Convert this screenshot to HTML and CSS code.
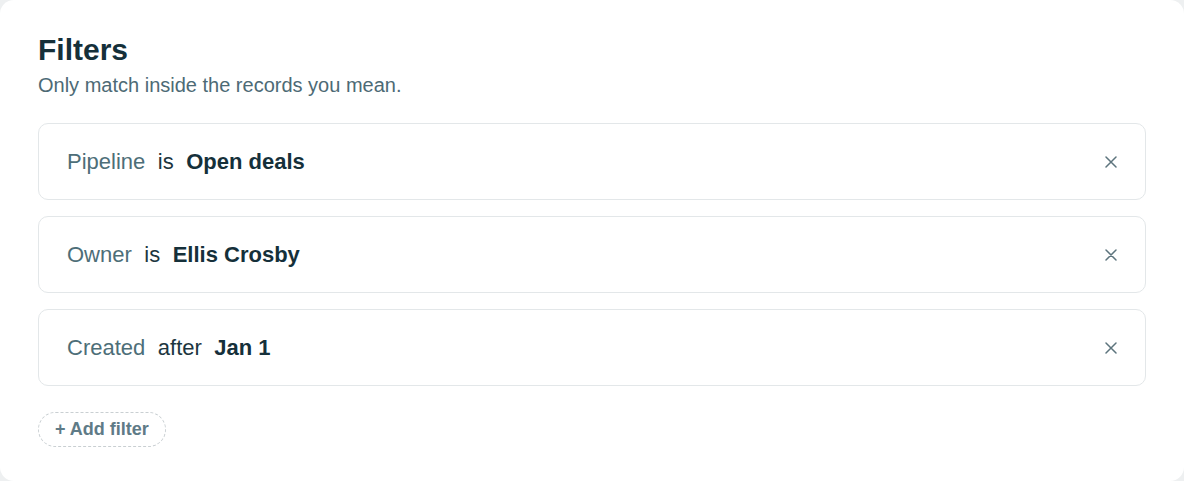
FILE: index.html
```html
<!DOCTYPE html>
<html lang="en">
<head>
<meta charset="utf-8">
<title>Filters</title>
<link rel="stylesheet" href="styles.css">
</head>
<body>
<div class="card">
  <h1 class="title">Filters</h1>
  <p class="subtitle">Only match inside the records you mean.</p>
  <div class="rows">
    <div class="row">
      <div class="cond"><span class="field">Pipeline</span><span class="op">is</span><span class="val">Open deals</span></div>
      <button class="remove" aria-label="Remove"><svg width="12" height="12" viewBox="0 0 12 12"><path d="M1 1L11 11M11 1L1 11" stroke="currentColor" stroke-width="1.5" stroke-linecap="round"/></svg></button>
    </div>
    <div class="row">
      <div class="cond"><span class="field">Owner</span><span class="op">is</span><span class="val">Ellis Crosby</span></div>
      <button class="remove" aria-label="Remove"><svg width="12" height="12" viewBox="0 0 12 12"><path d="M1 1L11 11M11 1L1 11" stroke="currentColor" stroke-width="1.5" stroke-linecap="round"/></svg></button>
    </div>
    <div class="row">
      <div class="cond"><span class="field">Created</span><span class="op">after</span><span class="val">Jan 1</span></div>
      <button class="remove" aria-label="Remove"><svg width="12" height="12" viewBox="0 0 12 12"><path d="M1 1L11 11M11 1L1 11" stroke="currentColor" stroke-width="1.5" stroke-linecap="round"/></svg></button>
    </div>
  </div>
  <button class="add">+ Add filter</button>
</div>
</body>
</html>
```
FILE: styles.css
```css
html, body {
  margin: 0;
  padding: 0;
  background: #eef0f1;
}
body {
  font-family: "Liberation Sans", Arial, sans-serif;
}
.card {
  box-sizing: border-box;
  width: 1184px;
  height: 481px;
  background: #ffffff;
  border-radius: 14px;
  padding: 32px 38px 0 38px;
  display: flex;
  flex-direction: column;
  align-items: flex-start;
}
.title {
  margin: 0;
  font-size: 30px;
  line-height: 36px;
  font-weight: 700;
  color: #15303a;
}
.subtitle {
  margin: 4px 0 0 0;
  font-size: 20px;
  line-height: 26px;
  color: #4d6a75;
}
.rows {
  align-self: stretch;
  margin-top: 25px;
  display: flex;
  flex-direction: column;
  gap: 16px;
}
.row {
  box-sizing: border-box;
  height: 77px;
  border: 1px solid #e3e7e9;
  border-radius: 10px;
  padding: 0 28px 0 28px;
  display: flex;
  align-items: center;
  justify-content: space-between;
}
.cond {
  display: flex;
  align-items: baseline;
  gap: 12.5px;
  font-size: 22px;
  line-height: 26px;
}
.field { color: #4d6e78; }
.op { color: #1c3640; }
.val { color: #15303a; font-weight: 700; }
.remove {
  border: 0;
  background: none;
  padding: 0;
  width: 12px;
  height: 12px;
  color: #5d747d;
  display: flex;
}
.add {
  margin-top: 26px;
  box-sizing: border-box;
  height: 35px;
  padding: 0 16px;
  border: 1px dashed #c9cfd2;
  border-radius: 18px;
  background: #ffffff;
  font-family: "Liberation Sans", Arial, sans-serif;
  font-size: 18px;
  font-weight: 700;
  color: #5f7b87;
}
```
